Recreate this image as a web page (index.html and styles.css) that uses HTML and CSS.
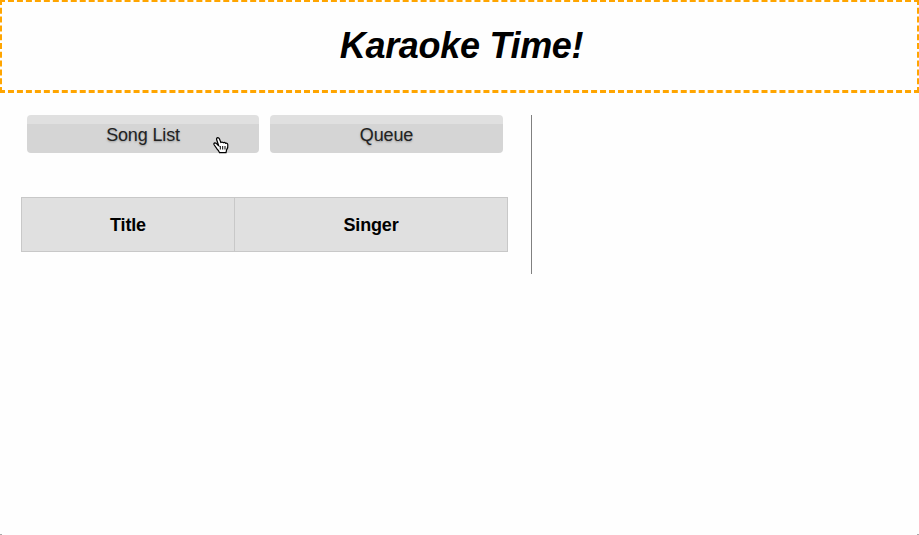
FILE: index.html
```
<!DOCTYPE html>
<html lang="en"><head><meta charset="utf-8"><title>Karaoke Time!</title><link rel="stylesheet" href="styles.css"></head>
<body>
<header class="banner"><h1>Karaoke Time!</h1></header>
<main class="content">
<section class="panel">
<nav class="tabs"><button class="tab">Song List<svg class="cursor" viewBox="0 0 16 17" width="16" height="17"><path d="M5.6 8.5 3.6 2.5Q3.3.8 4.7.7Q6 .7 6.5 2L7.8 5.4Q9.2 4.5 10.3 5.7Q11.6 4.9 12.7 6.3Q14.6 5.8 14.8 7.8Q15.2 10.5 13.6 12.8L13 15.7H6.5Q5.8 13.4 3.8 11.7L1.1 7.8Q.3 6.1 2 5.8Q3.3 5.8 4.3 7.5Z" fill="#fff" stroke="#000" stroke-width="1.2"/><path d="M7.3 9v3.5M9.7 9v3.5M12 9v3.5" stroke="#000"/></svg></button><button class="tab tab-wide">Queue</button></nav>
<table class="songs"><thead><tr><th class="title">Title</th><th>Singer</th></tr></thead></table>
</section>
</main>
<i class="corner corner-left"></i><i class="corner corner-right"></i>
</body></html>
```
FILE: styles.css
```
* { box-sizing: border-box; }
html { overflow: hidden; background: #fefefe; }
body { margin: 0; height: 535px; overflow: hidden; font-family: "Liberation Sans", Arial, sans-serif; color: #000; }
.banner { height: 94px; margin: -1px -1px 0; border: 3px dashed orange; display: flex; align-items: center; justify-content: center; }
h1 { margin: 0 0 0 4px; font-size: 36px; font-style: italic; line-height: 40px; letter-spacing: -0.3px; }
.content { padding: 22px 0 0 21px; }
.panel { width: 511px; height: 159px; border-right: 1px solid #808080; }
.tabs { display: flex; gap: 11px; padding-left: 6px; }
.tab { position: relative; width: 232px; height: 38px; padding: 2px 0 0; border: 0; border-radius: 4px; background: linear-gradient(#e0e0e0 9px, #d5d5d5 9px); font: 18px "Liberation Sans", Arial, sans-serif; letter-spacing: -0.15px; color: #222; text-shadow: 0 1px 2px #999; }
.tab-wide { width: 233px; }
.cursor { position: absolute; left: 186px; top: 22px; fill: none; }
.songs { width: 487px; height: 55px; margin-top: 44px; border-collapse: collapse; background: #e0e0e0; font-size: 18px; letter-spacing: -0.15px; }
th { padding: 2px 0 0; border: 1px solid #c8c8c8; }
.title { width: 213px; }
.corner { position: absolute; bottom: 0; width: 2px; height: 1px; background: #aaa; }
.corner-left { left: 0; }
.corner-right { right: 0; }
```
